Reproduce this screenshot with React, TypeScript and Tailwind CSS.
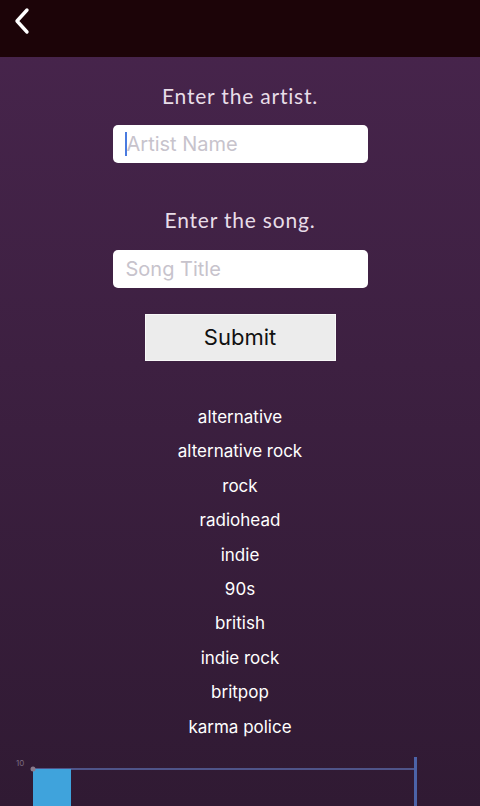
const tags = [
  "alternative",
  "alternative rock",
  "rock",
  "radiohead",
  "indie",
  "90s",
  "british",
  "indie rock",
  "britpop",
  "karma police",
];

const BackChevron = () => (
  <svg width="20" height="28" viewBox="0 0 20 28" fill="none">
    <path d="M15 3 L5 14 L15 25" stroke="#ffffff" strokeWidth="3.4" strokeLinecap="round" strokeLinejoin="round" />
  </svg>
);

const TagChart = () => (
  <svg width="480" height="56" viewBox="0 0 480 56" className="block">
    <text x="16" y="16" fontSize="8" fill="#7b6a80" fontFamily="Inter, sans-serif">10</text>
    <line x1="33" y1="19" x2="415" y2="19" stroke="#5a68a6" strokeWidth="1.5" />
    <rect x="33" y="19" width="38" height="37" fill="#3fa3dc" />
    <circle cx="33" cy="19" r="2.5" fill="#8a7a8c" />
    <rect x="414" y="7" width="3" height="49" fill="#4c63a8" />
  </svg>
);

const App: React.FC = () => {
  return (
    <div className="flex h-[806px] w-[480px] flex-col overflow-hidden bg-gradient-to-b from-[#48254d] to-[#301a33]">
      <div className="flex h-[57px] shrink-0 items-start bg-[#1c0408] pl-[12px] pt-[7px]">
        <BackChevron />
      </div>
      <div className="flex flex-col items-center pt-[27px]" style={{ fontFamily: "Lato, sans-serif" }}>
        <p className="text-[21px] leading-[24px] tracking-[0.8px] text-[#e8dde8]">Enter the artist.</p>
        <div className="mt-[17px] flex h-[38px] w-[255px] items-center rounded-[5px] bg-white pl-[12px]">
          <span className="h-[24px] w-[2px] bg-[#4a7be0]" />
          <span className="text-[20px] text-[#c7c3cc]" style={{ fontFamily: "Inter, sans-serif" }}>Artist Name</span>
        </div>
        <p className="mt-[45px] text-[21px] leading-[24px] tracking-[0.8px] text-[#e8dde8]">Enter the song.</p>
        <div className="mt-[18px] flex h-[38px] w-[255px] items-center rounded-[5px] bg-white pl-[13px]">
          <span className="text-[20px] text-[#c7c3cc]" style={{ fontFamily: "Inter, sans-serif" }}>Song Title</span>
        </div>
        <button className="mt-[26px] flex h-[47px] w-[191px] items-center justify-center border border-[#f8f8f8] bg-[#ececec] text-[22px] text-[#111111]" style={{ fontFamily: "Inter, sans-serif" }}>
          Submit
        </button>
        <ul className="mt-[39px] flex flex-col items-center" style={{ fontFamily: "Inter, sans-serif" }}>
          {tags.map((t) => (
            <li key={t} className="h-[34.4px] text-[17px] leading-[34.4px] text-white">
              {t}
            </li>
          ))}
        </ul>
      </div>
      <div className="mt-[6px]">
        <TagChart />
      </div>
    </div>
  );
};

export default App;
